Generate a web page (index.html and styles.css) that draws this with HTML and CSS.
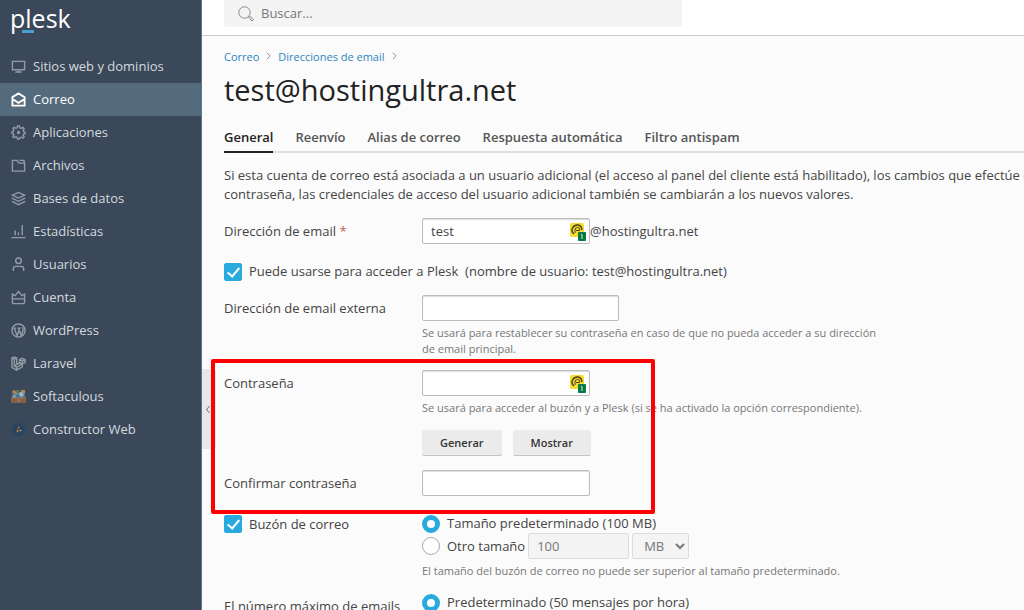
FILE: index.html
```html
<!DOCTYPE html>
<html lang="es">
<head>
<meta charset="utf-8">
<title>test@hostingultra.net - Plesk</title>
<link rel="stylesheet" href="styles.css">
</head>
<body>
<div class="app">
  <aside class="sidebar">
    <a class="logo" href="#">p<span class="logo-mark">l</span>esk</a>
    <nav class="nav">
      <a class="nav-item" href="#"><svg class="icon" viewBox="0 0 16 16"><path d="M1.500 2.500h13v9h-13zM4.500 14h7M6 13.500h4"/></svg>Sitios web y dominios</a>
      <a class="nav-item active" href="#"><svg class="icon" viewBox="0 0 16 16"><path stroke-width="2" d="M1.500 5.500 8 1.500l6.500 4v9h-13zM1.500 7.500 8 11.500l6.500-4"/></svg>Correo</a>
      <a class="nav-item" href="#"><svg class="icon" viewBox="0 0 16 16"><path d="M6.500 3 7 1h2l.5 2 1.500.6 1.800-1L14 4l-1 1.700.5 1.300 1.500.4v1.800l-1.500.4-.5 1.400 1 1.700-1.300 1.300-1.700-1-1.500.6L9 15H7l-.5-1.900-1.400-.5-1.800 1L2 12.300 3 10.600 2.500 9.200 1 8.800V7.200l1.500-.4L3 5.400 2 3.700l1.300-1.200 1.800 1z"/><circle cx="8" cy="8" r="1" fill="currentColor"/></svg>Aplicaciones</a>
      <a class="nav-item" href="#"><svg class="icon" viewBox="0 0 16 16"><path d="M1.500 2.500h5l2 3h6v8.500h-13zM9 2.500h5.500M14 2v3.500"/></svg>Archivos</a>
      <a class="nav-item" href="#"><svg class="icon" viewBox="0 0 16 16"><path d="m1.500 4.500 6.500-3 6.500 3-6.500 3zM1 7.500l7 3.500 7-3.500M1 11l7 3.500 7-3.500"/></svg>Bases de datos</a>
      <a class="nav-item" href="#"><svg class="icon" viewBox="0 0 16 16"><path d="M.5 14.500h15M4.500 12V7M8 12V9M12 12V1"/></svg>Estadísticas</a>
      <a class="nav-item" href="#"><svg class="icon" viewBox="0 0 16 16"><circle cx="8" cy="4" r="3"/><path d="M2.500 15v-2.500q0-2.500 2.500-2.500h6q2.500 0 2.500 2.500V15"/></svg>Usuarios</a>
      <a class="nav-item" href="#"><svg class="icon" viewBox="0 0 16 16"><path d="m1.500 4.500 3 1.500L8 1.500 11.500 6l3-1.500v8q0 2-2 2h-9q-2 0-2-2zM2 9.500h12"/></svg>Cuenta</a>
      <a class="nav-item" href="#"><svg class="icon" viewBox="0 0 16 16"><circle cx="8" cy="8" r="7"/><path stroke-width="1.500" d="M2.500 5.500h3M3.500 5.500l3 8L8.500 8M7 5.500h3M8 5.500l3 8 2-6q0-2-1.500-3"/></svg>WordPress</a>
      <a class="nav-item" href="#"><svg class="icon" viewBox="0 0 16 16"><path d="m1 2 2.500-1L6 2v7l3-1.500V4l3-1.500L15 4v3l-3 1.500v3L6 15l-5-3zM1 2l2.500 1.500L6 2M3.500 3.500v7L6 12l6-3.500M9 4l3 1.500L15 4M12 5.500v3L9 7.500M6 12v3M3.500 10.500 6 9"/></svg>Laravel</a>
      <a class="nav-item" href="#"><svg class="icon color" viewBox="0 0 16 16"><path fill="#3e79a4" d="M1 3h14v7H1z"/><path fill="#b8844a" d="M1 2 4 1l3 4-2 2zM10 1h5v3l-3 1z"/><path fill="#59805d" d="M5 1h3l1 3-2 1z"/><path fill="#9fb5c4" d="m8 5 3-2 3 3-3 3zM2 7h3v2H2z"/><path fill="#80604a" d="M0 9h16v6H0z"/><path fill="#a07657" d="M0 9h16v1H0zM7 11h3v2H7z"/></svg>Softaculous</a>
      <a class="nav-item" href="#"><svg class="icon color" viewBox="0 0 16 16"><circle cx="8" cy="8" r="6.500" fill="#2c435e" stroke="#25496c" stroke-width="2" stroke-dasharray="2 1"/><circle cx="8" cy="8" r="3" fill="#263645"/><path fill="#b8794b" d="M7 5h2v2H7zM6 8h2v3H6z"/><path fill="#879bad" d="M9 8h2v2H9z"/></svg>Constructor Web</a>
    </nav>
  </aside>

  <div class="page">
    <button class="collapse" type="button" aria-label="Contraer menú"><svg viewBox="0 0 8 12"><path d="M6 1.500 2 6l4 4.500"/></svg></button>
    <header class="topbar">
      <label class="search">
        <svg viewBox="0 0 16 16"><circle cx="6.500" cy="6.500" r="5.700"/><path d="m10.500 11 1-1 4 3.500-1.500 1.500z"/></svg>
        <input type="search" placeholder="Buscar..." aria-label="Buscar">
      </label>
    </header>

    <main class="content">
      <nav class="crumbs">
        <a href="#">Correo</a><svg viewBox="0 0 6 10"><path d="m1 1 4 4-4 4"/></svg>
        <a href="#">Direcciones de email</a><svg viewBox="0 0 6 10"><path d="m1 1 4 4-4 4"/></svg>
      </nav>
      <h1 class="title">test@hostingultra.net</h1>
      <nav class="tabs">
        <a class="tab current" href="#">General</a>
        <a class="tab" href="#">Reenvío</a>
        <a class="tab" href="#">Alias de correo</a>
        <a class="tab" href="#">Respuesta automática</a>
        <a class="tab" href="#">Filtro antispam</a>
      </nav>
      <p class="intro">Si esta cuenta de correo está asociada a un usuario adicional (el acceso al panel del cliente está habilitado), los cambios que efectúe en<br>contraseña, las credenciales de acceso del usuario adicional también se cambiarán a los nuevos valores.</p>

      <form class="form">
        <div class="row">
          <label class="name" for="email">Dirección de email <span class="required">*</span></label>
          <div class="field inline">
            <span class="key-box"><input class="text" id="email" type="text" value="test"><svg class="key" viewBox="0 0 18 20"><rect x="1" y="1" width="14" height="14" rx="2" fill="#f5dc2e"/><path fill="none" stroke="#4b421b" stroke-width="1.500" d="M5 12Q2 10 3.500 6 5.500 2.500 9 3q4 1 4 5"/><path fill="none" stroke="#4b421b" d="M6 11V8q0-2.500 2.500-2.500T11 8M7 8.500h4"/><rect x="9" y="10" width="8" height="9" rx="1" fill="#087a48"/><path fill="none" stroke="#d4e5a3" d="m12 13 1-.5V17"/></svg></span><span>@hostingultra.net</span>
          </div>
        </div>
        <label class="check"><input type="checkbox" checked><span>Puede usarse para acceder a Plesk&nbsp; (nombre de usuario: test@hostingultra.net)</span></label>
        <div class="row">
          <label class="name" for="external">Dirección de email externa</label>
          <div class="field">
            <input class="text wide" id="external" type="text">
            <p class="hint">Se usará para restablecer su contraseña en caso de que no pueda acceder a su dirección<br>de email principal.</p>
          </div>
        </div>
        <section class="passwords">
          <div class="row">
            <label class="name" for="password">Contraseña</label>
            <div class="field">
              <span class="key-box"><input class="text" id="password" type="password"><svg class="key" viewBox="0 0 18 20"><rect x="1" y="1" width="14" height="14" rx="2" fill="#f5dc2e"/><path fill="none" stroke="#4b421b" stroke-width="1.500" d="M5 12Q2 10 3.500 6 5.500 2.500 9 3q4 1 4 5"/><path fill="none" stroke="#4b421b" d="M6 11V8q0-2.500 2.500-2.500T11 8M7 8.500h4"/><rect x="9" y="10" width="8" height="9" rx="1" fill="#087a48"/><path fill="none" stroke="#d4e5a3" d="m12 13 1-.5V17"/></svg></span>
              <p class="hint">Se usará para acceder al buzón y a Plesk (si se ha activado la opción correspondiente).</p>
              <div class="buttons"><button class="btn" type="button">Generar</button><button class="btn" type="button">Mostrar</button></div>
            </div>
          </div>
          <div class="row">
            <label class="name" for="confirm">Confirmar contraseña</label>
            <div class="field"><input class="text" id="confirm" type="password"></div>
          </div>
        </section>
        <div class="row mailbox">
          <label class="check"><input type="checkbox" checked><span>Buzón de correo</span></label>
          <div class="field">
            <label class="radio"><input type="radio" name="size" checked><span>Tamaño predeterminado (100 MB)</span></label>
            <div class="custom-size">
              <label class="radio"><input type="radio" name="size"><span>Otro tamaño</span></label>
              <input class="text size" type="text" value="100" aria-label="Tamaño" disabled>
              <select class="unit" aria-label="Unidad" disabled><option>MB</option></select>
            </div>
            <p class="hint">El tamaño del buzón de correo no puede ser superior al tamaño predeterminado.</p>
          </div>
        </div>
        <div class="row">
          <span class="name">El número máximo de emails</span>
          <div class="field"><label class="radio"><input type="radio" name="limit" checked><span>Predeterminado (50 mensajes por hora)</span></label></div>
        </div>
      </form>
    </main>
  </div>
</div>
</body>
</html>
```

FILE: styles.css
```css
*, *::before, *::after { box-sizing: border-box; }
body {
  margin: 0;
  font: 13px/19px "Open Sans", "Noto Sans", sans-serif;
  color: #444;
  background: #fbfbfb;
}
a { text-decoration: none; }
p, h1 { margin: 0; }
input, button, select { font: inherit; color: inherit; margin: 0; }
.app { display: flex; height: 100vh; overflow: hidden; }

.sidebar { flex: 0 0 202px; background: #3a4859; border-right: 1px solid #667380; }
.logo {
  display: block;
  height: 50px;
  padding-left: 10px;
  font-size: 25px;
  line-height: 36px;
  color: #fff;
}
.logo-mark { position: relative; }
.logo-mark::after {
  content: "";
  position: absolute;
  left: -3px;
  bottom: 2px;
  width: 12px;
  height: 3px;
  background: #469fd0;
}
.nav-item {
  display: flex;
  align-items: center;
  gap: 7px;
  height: 33px;
  padding-left: 11px;
  font-weight: 500;
  color: #d5dadf;
}
.nav-item.active { background: #546a7d; color: #fff; }
.icon {
  width: 15px;
  height: 15px;
  fill: none;
  stroke: currentColor;
  stroke-width: 1.5;
  color: #929ca6;
}
.active .icon { color: #fff; }
.icon.color { stroke: none; }

.page { position: relative; flex: 1; min-width: 0; }
.topbar {
  height: 36px;
  padding: 0 22px;
  background: #fff;
  border-bottom: 1px solid #ccc;
}
.search {
  display: flex;
  align-items: center;
  gap: 7px;
  max-width: 458px;
  height: 27px;
  padding: 0 14px;
  background: #f4f4f4;
  border-radius: 0 0 3px 3px;
}
.search svg { width: 16px; height: 16px; fill: none; stroke: #888; }
.search input { flex: 1; padding: 0; border: 0; background: none; outline: 0; }
.search input::placeholder { color: #777; opacity: 1; }
.collapse {
  position: absolute;
  left: 0;
  top: 369px;
  width: 14px;
  height: 80px;
  padding: 0 0 0 3px;
  border: 0;
  border-radius: 0 3px 3px 0;
  background: #e8e8e8;
}
.collapse svg { display: block; width: 6px; height: 9px; fill: none; stroke: #333; }

.content { padding: 11px 0 0 22px; }
.crumbs { display: flex; align-items: center; gap: 7px; height: 18px; font-size: 11px; }
.crumbs a { color: #2c85bd; }
.crumbs svg { width: 5px; height: 8px; fill: none; stroke: #777; }
.title { margin-top: 5px; font-size: 29px; line-height: 40px; font-weight: 400; color: #222; }
.tabs { display: flex; gap: 22px; margin-top: 18px; border-bottom: 2px solid #e0e0e0; }
.tab { padding-bottom: 4px; margin-bottom: -2px; border-bottom: 2px solid transparent; font-weight: 600; color: #555; }
.tab.current { border-color: #222; color: #222; }
.intro { margin-top: 13px; white-space: nowrap; }

.form { margin-top: 14px; white-space: nowrap; }
.row { display: grid; grid-template-columns: 198px 1fr; }
.name { line-height: 26px; }
.required { color: #c15f50; }
.inline { display: flex; align-items: center; }
.text {
  display: block;
  width: 168px;
  height: 26px;
  padding: 0 8px;
  border: 1px solid #bbb;
  border-radius: 2px;
  background: #fff;
  box-shadow: inset 0 1px 1px #ddd;
}
.text.wide { width: 197px; }
.key-box { position: relative; display: block; width: 168px; }
.key { position: absolute; right: 3px; top: 4px; width: 18px; height: 20px; }
.hint { margin-top: 4px; font-size: 11px; line-height: 16px; color: #777; }

.check { display: flex; align-items: center; gap: 7px; height: 19px; }
.form > .check { margin: 18px 0 14px; }
.check input, .radio input {
  appearance: none;
  flex: none;
  width: 18px;
  height: 18px;
  border: 1px solid #aaa;
  background: #fff;
}
.check input { border-radius: 2px; }
.check input:checked { position: relative; border-color: #28aade; background: #28aade; }
.check input:checked::after {
  content: "";
  position: absolute;
  left: 5px;
  top: 1px;
  width: 7px;
  height: 12px;
  border: solid #fff;
  border-width: 0 2px 2px 0;
  transform: rotate(40deg);
}
.radio { display: flex; align-items: center; gap: 7px; height: 19px; }
.radio input { border-radius: 50%; }
.radio input:checked { border: 5px solid #28aade; }

.passwords { position: relative; display: grid; gap: 14px; margin-top: 13px; }
.passwords::after {
  content: "";
  position: absolute;
  top: -11px;
  bottom: -18px;
  left: -13px;
  width: 444px;
  border: 4px solid #f00;
  border-radius: 2px;
  pointer-events: none;
}
.buttons { display: flex; gap: 11px; margin-top: 14px; }
.btn {
  height: 26px;
  padding: 0 18px;
  border: 0;
  border-bottom: 1px solid #c4c4c4;
  border-radius: 2px;
  background: #ebebeb;
  font-size: 11px;
  font-weight: 600;
  color: #333;
}
.mailbox { margin: 18px 0 14px; }
.mailbox > .check { height: 20px; }
.custom-size { display: flex; align-items: center; gap: 3px; }
.size { width: 101px; border-color: #ddd; background: #f4f4f4; box-shadow: none; color: #777; }
.unit {
  width: 57px;
  height: 26px;
  padding: 0 0 0 7px;
  border: 1px solid #ddd;
  border-radius: 2px;
  background: #f4f4f4;
  color: #777;
  opacity: 1;
}
```
